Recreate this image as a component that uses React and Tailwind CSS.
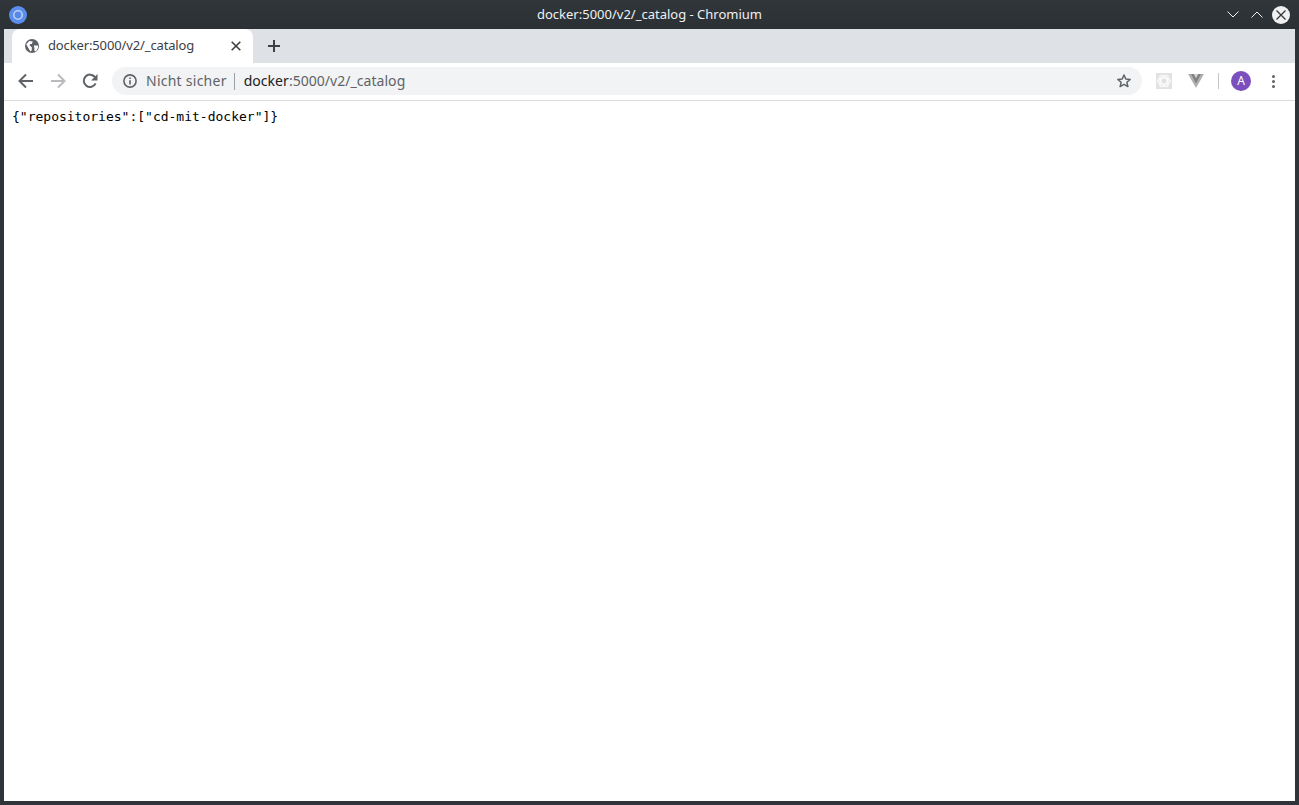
function BackIcon({ color }) {
  return (
    <svg width="16" height="16" viewBox="0 0 16 16" fill="none">
      <path d="M15 8H2M8 1.5L1.5 8 8 14.5" stroke={color} strokeWidth="2" />
    </svg>
  );
}

function ForwardIcon({ color }) {
  return (
    <svg width="16" height="16" viewBox="0 0 16 16" fill="none">
      <path d="M1 8h13M8 1.5L14.5 8 8 14.5" stroke={color} strokeWidth="2" />
    </svg>
  );
}

function ReloadIcon() {
  return (
    <svg width="16" height="16" viewBox="0 0 16 16" fill="none">
      <path d="M13.6 10.4A6.2 6.2 0 1 1 13 4.2" stroke="#5f6368" strokeWidth="2" />
      <path d="M15.5 1v6.4H9.1z" fill="#5f6368" />
    </svg>
  );
}

function GlobeIcon() {
  return (
    <svg width="14" height="14" viewBox="0 0 14 14">
      <circle cx="7" cy="7" r="7" fill="#5f6368" />
      <path d="M1.2 5.2L4.2 2l3.6.4-1 2.6H5.2L4.6 6.6l2.2 1.6v3L5.4 12.6zM8.8 6.4h4.2L13 9l-2 3.4-1.6-.6V9z" fill="#fff" />
    </svg>
  );
}

function InfoIcon() {
  return (
    <svg width="14" height="14" viewBox="0 0 14 14" fill="none">
      <circle cx="7" cy="7" r="6.1" stroke="#5f6368" strokeWidth="1.6" />
      <path d="M6.2 6.2h1.6v4.3H6.2zM6.2 3.5h1.6v1.6H6.2z" fill="#5f6368" />
    </svg>
  );
}

function StarIcon() {
  return (
    <svg width="16" height="16" viewBox="0 0 16 16" fill="none">
      <path d="M8 2l1.8 4 4.4.4-3.3 2.9 1 4.3L8 11.4l-3.9 2.2 1-4.3-3.3-2.9 4.4-.4z" stroke="#5f6368" strokeWidth="1.5" strokeLinejoin="round" />
    </svg>
  );
}

function ReactExtension() {
  return (
    <svg width="16" height="16" viewBox="0 0 16 16" fill="none">
      <rect width="16" height="16" fill="#e2e2e2" />
      <g stroke="#fafafa" strokeWidth="1.5">
        <ellipse cx="8" cy="8" rx="6.2" ry="3.2" />
        <ellipse cx="8" cy="8" rx="6.2" ry="3.2" transform="rotate(60 8 8)" />
        <ellipse cx="8" cy="8" rx="6.2" ry="3.2" transform="rotate(120 8 8)" />
      </g>
    </svg>
  );
}

function VueExtension() {
  return (
    <svg width="16" height="14" viewBox="0 0 16 14">
      <path d="M0 0h16L8 14z" fill="#b0b0b0" />
      <path d="M3 0h10L8 9.5z" fill="#808080" />
      <path d="M5.6 0h4.8L8 4.2z" fill="#d2d2d2" />
    </svg>
  );
}

function ChromiumLogo() {
  return (
    <svg width="18" height="18" viewBox="0 0 18 18" fill="none">
      <circle cx="9" cy="9" r="9" fill="#5b8def" />
      <circle cx="9" cy="9" r="4.2" fill="#5688e6" stroke="#bcd0f3" strokeWidth="1.6" />
    </svg>
  );
}

export default function App() {
  return (
    <div className="flex h-[805px] w-[1299px] flex-col overflow-hidden bg-[#2f343a] px-1 pb-1 font-['Noto_Sans',sans-serif]">
      <div className="relative -mx-1 flex h-[29px] shrink-0 items-center justify-between bg-gradient-to-b from-[#31363b] to-[#2b3035] pl-[9px] pr-[9px]">
        <ChromiumLogo />
        <div className="absolute inset-x-0 text-center text-[13px] text-[#eff0f1]">docker:5000/v2/_catalog - Chromium</div>
        <div className="flex items-center">
          <svg width="12" height="7" viewBox="0 0 12 7" fill="none">
            <path d="M.5.5L6 6 11.5.5" stroke="#eff0f1" />
          </svg>
          <svg className="ml-3" width="12" height="7" viewBox="0 0 12 7" fill="none">
            <path d="M.5 6.5L6 1l5.5 5.5" stroke="#eff0f1" />
          </svg>
          <div className="ml-[9px] flex h-[18px] w-[18px] items-center justify-center rounded-full bg-[#eff0f1]">
            <svg width="10" height="10" viewBox="0 0 10 10" fill="none">
              <path d="M.5.5l9 9M9.5.5l-9 9" stroke="#31363b" strokeWidth="1.3" />
            </svg>
          </div>
        </div>
      </div>

      <div className="flex h-[34px] shrink-0 items-end bg-[#dee1e6] pl-2">
        <div className="flex h-[34px] w-[241px] items-center rounded-t-lg bg-white pl-[13px] pr-3">
          <GlobeIcon />
          <span className="ml-[9px] flex-1 text-[13px] tracking-[-0.13px] text-[#3c4043]">docker:5000/v2/_catalog</span>
          <svg width="10" height="10" viewBox="0 0 10 10" fill="none">
            <path d="M.7.7l8.6 8.6M9.3.7L.7 9.3" stroke="#3c4043" strokeWidth="1.6" />
          </svg>
        </div>
        <div className="ml-[15px] flex h-[34px] items-center">
          <svg width="12" height="12" viewBox="0 0 12 12" fill="none">
            <path d="M6 0v12M0 6h12" stroke="#3c4043" strokeWidth="2" />
          </svg>
        </div>
      </div>

      <div className="flex h-[37px] shrink-0 items-center bg-white pb-px pl-[14px] pr-[14px]">
        <BackIcon color="#5f6368" />
        <div className="ml-4">
          <ForwardIcon color="#b8babd" />
        </div>
        <div className="ml-4">
          <ReloadIcon />
        </div>
        <div className="ml-[14px] flex h-7 w-[1030px] items-center rounded-full bg-[#f1f3f4] pl-[11px] pr-[10px]">
          <InfoIcon />
          <span className="ml-[9px] text-sm tracking-[0.25px] text-[#5f6368]">Nicht sicher</span>
          <div className="ml-[7px] h-[17px] w-px bg-[#9aa0a6]" />
          <span className="ml-[9px] flex-1 text-sm tracking-[0.04px] text-[#5f6368]">
            <span className="text-[#202124]">docker</span>:5000/v2/_catalog
          </span>
          <StarIcon />
        </div>
        <div className="ml-[14px]">
          <ReactExtension />
        </div>
        <div className="ml-4">
          <VueExtension />
        </div>
        <div className="ml-[14px] h-4 w-px bg-[#c4c6c8]" />
        <div className="ml-3 flex h-5 w-5 items-center justify-center rounded-full bg-[#7b4fbd] text-xs text-white">A</div>
        <div className="ml-[21px] flex flex-col gap-[2px]">
          <div className="h-[3px] w-[3px] rounded-full bg-[#5f6368]" />
          <div className="h-[3px] w-[3px] rounded-full bg-[#5f6368]" />
          <div className="h-[3px] w-[3px] rounded-full bg-[#5f6368]" />
        </div>
      </div>

      <div className="min-h-0 flex-1 border-t border-[#dadce0] bg-white px-2 py-2">
        <pre className="font-['DejaVu_Sans_Mono',monospace] text-[13px] leading-[15px] text-black">{'{"repositories":["cd-mit-docker"]}'}</pre>
      </div>
    </div>
  );
}
